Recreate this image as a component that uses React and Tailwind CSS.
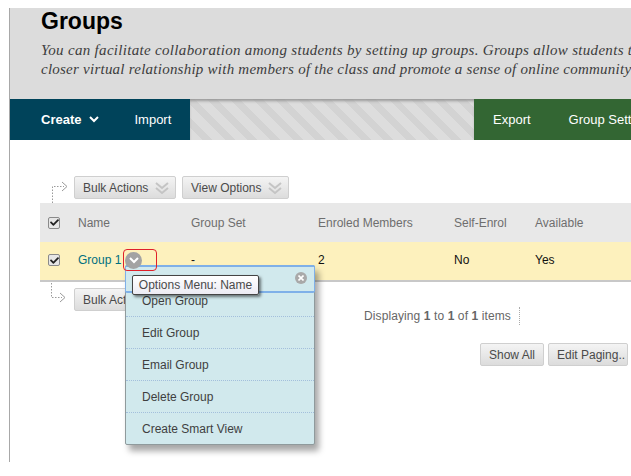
import React from "react";
import { FaCheck } from "react-icons/fa";

const Caret = () => (
  <svg width="16" height="16" viewBox="0 0 16 16" fill="none" stroke="#c4c4c4" strokeWidth="2">
    <path d="M2 3l6 5 6-5" />
    <path d="M2 8l6 5 6-5" />
  </svg>
);

const Button = ({ children, className = "" }) => (
  <div
    className={`h-[23px] flex items-center border border-[#cfcfcf] rounded-[2px] bg-gradient-to-b from-[#f4f4f4] to-[#dcdcdc] text-[12px] text-[#4a4a4a] ${className}`}
  >
    {children}
  </div>
);

const Check = () => (
  <div className="w-[12px] h-[12px] border border-[#8a8a8a] rounded-[2px] bg-[#e6e6e6] flex items-center justify-center">
    <FaCheck className="text-[#222] text-[9px]" />
  </div>
);

const ArrowUp = () => (
  <svg width="24" height="27" viewBox="0 0 24 27" fill="none" stroke="#9a9a9a" strokeDasharray="1.5 1.5">
    <path d="M2.5 27V10.5H14" />
    <path d="M12 6l5 4.5-5 4.5" strokeDasharray="none" />
  </svg>
);

const ArrowDown = () => (
  <svg width="24" height="24" viewBox="0 0 24 24" fill="none" stroke="#9a9a9a" strokeDasharray="1.5 1.5" className="-mt-[5px]">
    <path d="M1.5 0V14.5H12" />
    <path d="M10 10l5 4.5-5 4.5" strokeDasharray="none" />
  </svg>
);

const menuItems = ["Open Group", "Edit Group", "Email Group", "Delete Group", "Create Smart View"];

const App = () => {
  return (
    <div className="relative w-[631px] h-[476px] overflow-hidden bg-white font-['Liberation_Sans',Arial,sans-serif]">
      <div className="ml-[9px] mt-[8px] w-[622px] h-[454px] border-l border-[#a8a8a8]">
        <div className="h-[91px] bg-[#dcdcdc] pl-[31px] overflow-hidden whitespace-nowrap">
          <h1 className="text-[23px] leading-[26px] font-bold text-black">Groups</h1>
          <p className="mt-[7px] font-['Liberation_Serif',serif] italic text-[15px] leading-[19px] text-[#3c3c3c]">
            <span className="tracking-[0.31px]">
              You can facilitate collaboration among students by setting up groups. Groups allow students to
            </span>
            <br />
            <span className="tracking-[0.24px]">
              closer virtual relationship with members of the class and promote a sense of online community
            </span>
          </p>
        </div>

        <div className="h-[41px] flex text-white text-[13px] overflow-hidden whitespace-nowrap">
          <div className="w-[180px] shrink-0 bg-[#00435a] flex items-center pl-[31px]">
            <span className="font-bold">Create</span>
            <svg width="10" height="7" viewBox="0 0 10 7" fill="none" stroke="white" strokeWidth="2" className="ml-[8px]">
              <path d="M1 1l4 4 4-4" />
            </svg>
            <span className="ml-[35px]">Import</span>
          </div>
          <div className="w-[284px] shrink-0 bg-[repeating-linear-gradient(45deg,#dddddd_0px,#dddddd_9px,#d3d3d3_9px,#d3d3d3_16px)] shadow-[inset_0_3px_3px_-1px_#999]" />
          <div className="flex-1 bg-[#336633] flex items-center pl-[19px]">
            <span>Export</span>
            <span className="ml-[38px]">Group Settings</span>
          </div>
        </div>

        <div className="pt-[36px]">
          <div className="flex items-start pl-[40px] h-[27px]">
            <ArrowUp />
            <div className="flex gap-[6px]">
              <Button className="w-[102px] pl-[8px] gap-[6px]">
                Bulk Actions <Caret />
              </Button>
              <Button className="w-[107px] pl-[8px] gap-[6px]">
                View Options <Caret />
              </Button>
            </div>
          </div>

          <div className="ml-[30px] h-[39px] bg-[#e8e8e8] flex items-center text-[12px] text-[#6e6e6e]">
            <div className="w-[38px] pl-[8px]">
              <Check />
            </div>
            <div className="w-[113px]">Name</div>
            <div className="w-[127px]">Group Set</div>
            <div className="w-[136px]">Enroled Members</div>
            <div className="w-[81px]">Self-Enrol</div>
            <div>Available</div>
          </div>
          <div className="ml-[30px] h-[40px] bg-[#fdf1bd] border-b-2 border-[#c8c8c8] pb-[2px] flex items-center text-[12px] text-[#111]">
            <div className="w-[38px] pl-[8px]">
              <Check />
            </div>
            <div className="w-[113px] text-[#006f7f]">Group 1</div>
            <div className="w-[127px]">-</div>
            <div className="w-[136px]">2</div>
            <div className="w-[81px]">No</div>
            <div>Yes</div>
          </div>

          <div className="flex items-start pl-[40px] h-[27px] mt-[6px]">
            <ArrowDown />
            <Button className="w-[102px] pl-[8px] gap-[6px]">
              Bulk Actions <Caret />
            </Button>
          </div>

          <div className="pl-[354px] mt-[-9px] flex items-center h-[20px] text-[12px] tracking-[0.1px] text-[#666] whitespace-nowrap">
            <span>
              Displaying <b>1</b> to <b>1</b> of <b>1</b> items
            </span>
            <span className="ml-[8px] h-[18px] border-l border-dotted border-[#aaa]" />
          </div>

          <div className="flex gap-[4px] pl-[470px] mt-[17px] whitespace-nowrap">
            <Button className="w-[64px] shrink-0 justify-center">Show All</Button>
            <Button className="w-[80px] shrink-0 pl-[8px]">Edit Paging..</Button>
          </div>
        </div>
      </div>

      {/* options menu, sits over the table */}
      <div className="absolute left-[125px] top-[265px] w-[190px] h-[180px] pt-[19px] bg-[#d1e9ed] border border-[#8f9a9c] rounded-[2px] shadow-[4px_6px_6px_rgba(0,0,0,0.35)] text-[12px] text-[#3f3f3f]">
        <div className="absolute -left-px -top-px -right-px h-[28px] border-t-2 border-b-2 border-x border-[#7fb0e8] rounded-[2px]" />
        <div className="absolute right-[7px] top-[6px] w-[12px] h-[12px] rounded-full bg-[#a9a9a9] flex items-center justify-center">
          <svg width="6" height="6" viewBox="0 0 6 6" stroke="white" strokeWidth="1.6">
            <path d="M0.5 0.5l5 5M5.5 0.5l-5 5" />
          </svg>
        </div>
        {menuItems.map((item, i) => (
          <div
            key={item}
            className={`h-[32px] flex items-center pl-[16px] border-dotted border-[#a3bfdc] ${i < menuItems.length - 1 ? "border-b" : ""}`}
          >
            {item}
          </div>
        ))}
      </div>

      {/* chevron button in the row */}
      <div className="absolute left-[125px] top-[252px] w-[17px] h-[17px] rounded-full bg-[#a3a3a3] flex items-center justify-center">
        <svg width="10" height="7" viewBox="0 0 10 7" fill="none" stroke="white" strokeWidth="2">
          <path d="M1 1l4 4 4-4" />
        </svg>
      </div>

      {/* red annotation */}
      <div className="absolute left-[123px] top-[249px] w-[34px] h-[22px] border border-[#e0202a] rounded-[4px]" />

      {/* tooltip */}
      <div className="absolute left-[132px] top-[275px] w-[127px] h-[20px] bg-gradient-to-b from-white to-[#ecebf3] border border-[#444] rounded-[2px] shadow-[2px_2px_3px_rgba(0,0,0,0.5)] flex items-center justify-center text-[12px] text-[#4a4a4a] whitespace-nowrap">
        Options Menu: Name
      </div>
    </div>
  );
};

export default App;
